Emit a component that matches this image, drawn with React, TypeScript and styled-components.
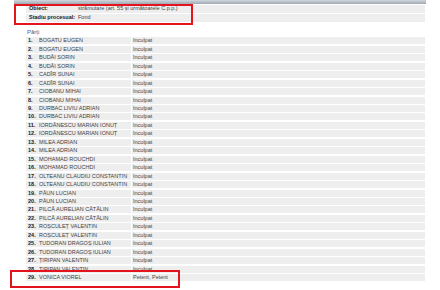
import React from "react";
import styled, { createGlobalStyle } from "styled-components";

const Global = createGlobalStyle`
  html, body { margin: 0; padding: 0; background: #fff; }
  body { font-family: "Liberation Sans", Arial, sans-serif; }
`;

const Page = styled.div`
  position: relative;
  width: 440px;
  height: 290px;
  overflow: hidden;
  background: #fff;
`;

const TopBar = styled.div`
  height: 4px;
  margin: 0 14px;
  background: linear-gradient(#d3d8de, #9ea8b2);
`;

const Content = styled.div`
  padding: 0 15px 0 26px;
`;

const InfoTable = styled.div`
  margin-top: 1px;
  display: grid;
  grid-template-columns: 51px 1fr;
  grid-auto-rows: 7.7px;
  row-gap: 1.3px;
`;

const Cell = styled.div<{ $bold?: boolean; $sep?: boolean; $pad?: number }>`
  background: #eeeeee;
  font-size: 5.5px;
  line-height: 7.7px;
  height: 100%;
  white-space: nowrap;
  overflow: hidden;
  color: ${(p) => (p.$bold ? "#1a1a1a" : "#444")};
  font-weight: ${(p) => (p.$bold ? 700 : 400)};
  padding-left: ${(p) => p.$pad ?? 2}px;
  box-sizing: border-box;
  border-left: ${(p) => (p.$sep ? "1px solid #fff" : "none")};
`;

const Title = styled.div`
  height: 15.7px;
  box-sizing: border-box;
  padding-top: 7.5px;
  padding-left: 1px;
  font-size: 6px;
  line-height: 6px;
  color: #4d5b8c;
`;

const PartyTable = styled.div`
  display: grid;
  grid-template-columns: 13px 92px 1fr;
  grid-auto-rows: 7px;
  row-gap: 1.46px;
  ${Cell} {
    line-height: 7.4px;
  }
`;

const Annotation = styled.div<{ $x: number; $y: number; $w: number; $h: number }>`
  position: absolute;
  left: ${(p) => p.$x}px;
  top: ${(p) => p.$y}px;
  width: ${(p) => p.$w}px;
  height: ${(p) => p.$h}px;
  border: 2px solid #e3141e;
  box-sizing: border-box;
  pointer-events: none;
`;

const parties: [string, string][] = [
  ["BOGATU EUGEN", "Inculpat"],
  ["BOGATU EUGEN", "Inculpat"],
  ["BUDĂI SORIN", "Inculpat"],
  ["BUDĂI SORIN", "Inculpat"],
  ["CADÎR SUNAI", "Inculpat"],
  ["CADÎR SUNAI", "Inculpat"],
  ["CIOBANU MIHAI", "Inculpat"],
  ["CIOBANU MIHAI", "Inculpat"],
  ["DURBAC LIVIU ADRIAN", "Inculpat"],
  ["DURBAC LIVIU ADRIAN", "Inculpat"],
  ["IORDĂNESCU MARIAN IONUȚ", "Inculpat"],
  ["IORDĂNESCU MARIAN IONUȚ", "Inculpat"],
  ["MILEA ADRIAN", "Inculpat"],
  ["MILEA ADRIAN", "Inculpat"],
  ["MOHAMAD ROUCHDI", "Inculpat"],
  ["MOHAMAD ROUCHDI", "Inculpat"],
  ["OLTEANU CLAUDIU CONSTANTIN", "Inculpat"],
  ["OLTEANU CLAUDIU CONSTANTIN", "Inculpat"],
  ["PĂUN LUCIAN", "Inculpat"],
  ["PĂUN LUCIAN", "Inculpat"],
  ["PILCĂ AURELIAN CĂTĂLIN", "Inculpat"],
  ["PILCĂ AURELIAN CĂTĂLIN", "Inculpat"],
  ["ROȘCULEȚ VALENTIN", "Inculpat"],
  ["ROȘCULEȚ VALENTIN", "Inculpat"],
  ["TUDORAN DRAGOȘ IULIAN", "Inculpat"],
  ["TUDORAN DRAGOȘ IULIAN", "Inculpat"],
  ["ȚIRIPAN VALENTIN", "Inculpat"],
  ["ȚIRIPAN VALENTIN", "Inculpat"],
  ["VONICA VIOREL", "Petent, Petent"],
];

export default function App() {
  return (
    <Page>
      <Global />
      <TopBar />
      <Content>
        <InfoTable>
          <Cell $bold $pad={3}>Obiect:</Cell>
          <Cell $pad={1}>strămutare (art. 55 și următoarele C.p.p.)</Cell>
          <Cell $bold $pad={3}>Stadiu procesual:</Cell>
          <Cell $pad={1}>Fond</Cell>
        </InfoTable>
        <Title>Părți</Title>
        <PartyTable>
          {parties.map(([name, role], i) => (
            <React.Fragment key={i}>
              <Cell $bold $pad={2}>{i + 1}.</Cell>
              <Cell $pad={0}>{name}</Cell>
              <Cell $sep $pad={1}>{role}</Cell>
            </React.Fragment>
          ))}
        </PartyTable>
      </Content>
      <Annotation $x={14} $y={4} $w={179} $h={21} />
      <Annotation $x={10} $y={270} $w={170} $h={18} />
    </Page>
  );
}
